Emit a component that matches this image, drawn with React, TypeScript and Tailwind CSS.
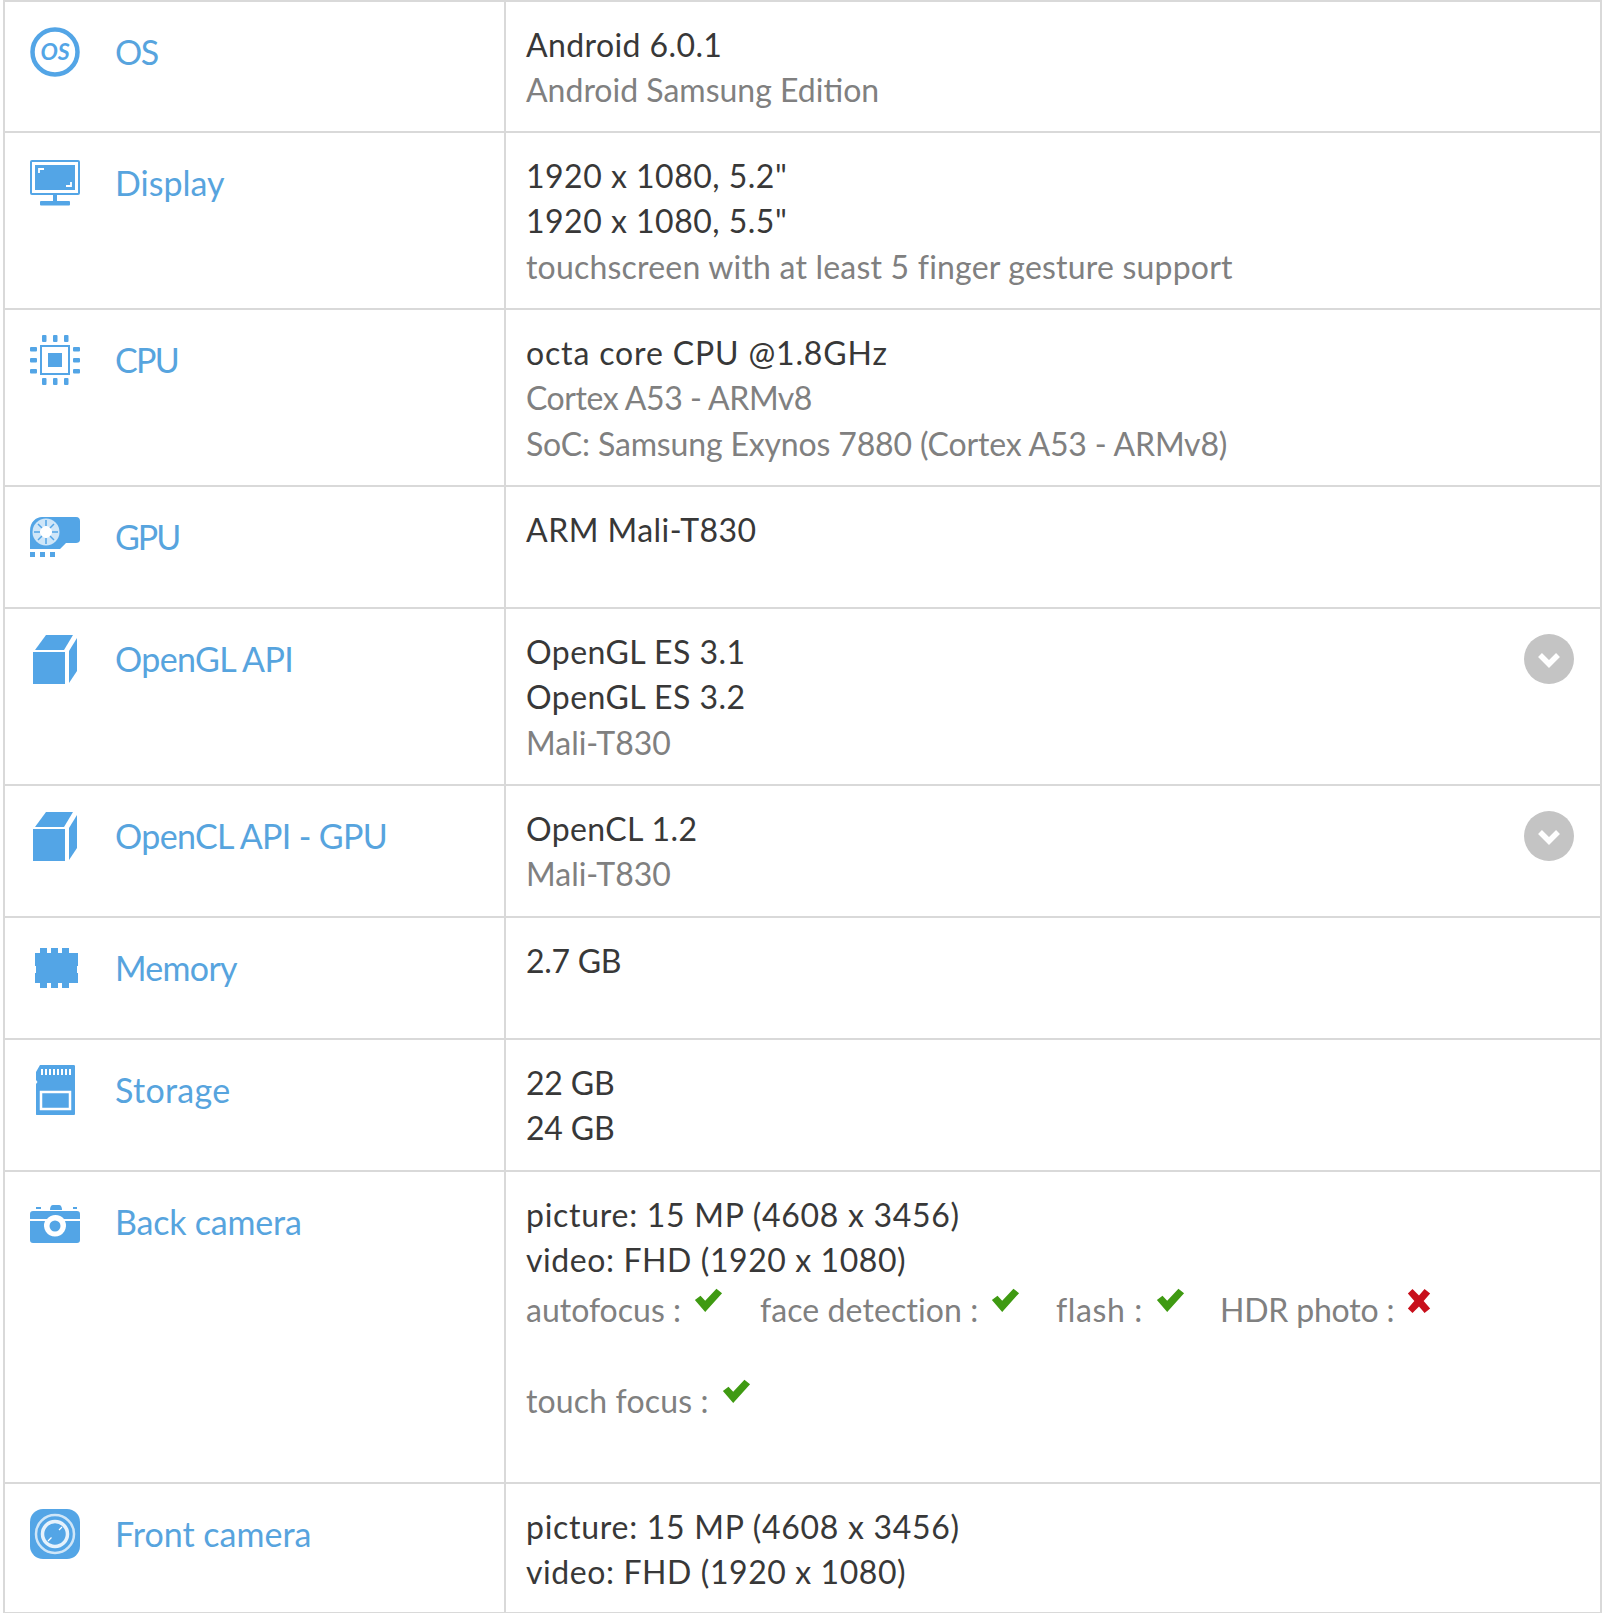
import React from "react";

const BLUE = "#53a5e6";

function Os() {
  return (
    <svg width="50" height="50" viewBox="0 0 50 50">
      <circle cx="25" cy="25" r="22.5" fill="none" stroke={BLUE} strokeWidth="4.5" />
      <text x="25" y="33" textAnchor="middle" fontFamily="Lato, sans-serif" fontStyle="italic" fontWeight="700" fontSize="23" fill={BLUE}>OS</text>
    </svg>
  );
}
function Display() {
  return (
    <svg width="50" height="50" viewBox="0 0 50 50">
      <rect x="1" y="3" width="48" height="33" rx="1" fill="none" stroke={BLUE} strokeWidth="2" />
      <rect x="5" y="7" width="40" height="25" fill={BLUE} />
      <path d="M9 15v-4h5M41 24v4h-5" fill="none" stroke="#fff" strokeWidth="1.8" />
      <rect x="23" y="37" width="4" height="7" fill={BLUE} />
      <rect x="10" y="43" width="30" height="4.5" rx="1" fill={BLUE} />
    </svg>
  );
}
function Cpu() {
  return (
    <svg width="50" height="50" viewBox="0 0 50 50">
      <rect x="11" y="11" width="28" height="28" fill="none" stroke={BLUE} strokeWidth="2" />
      <rect x="18" y="18" width="14" height="14" fill={BLUE} />
      {[12, 23, 34].map((p) => (
        <g key={p} fill={BLUE}>
          <rect x={p} y="0" width="4.5" height="7" rx="1" />
          <rect x={p} y="43" width="4.5" height="7" rx="1" />
          <rect x="0" y={p} width="7" height="4.5" rx="1" />
          <rect x="43" y={p} width="7" height="4.5" rx="1" />
        </g>
      ))}
    </svg>
  );
}
function Gpu() {
  return (
    <svg width="50" height="50" viewBox="0 0 50 50">
      <path d="M0 19C0 10 6 5 12 5h34c3 0 4 2 4 4v19c0 2-2 3-4 3H36l-6 6H0z" fill={BLUE} />
      <circle cx="16" cy="20" r="13.5" fill="#cfe6f8" />
      <circle cx="16" cy="20" r="6" fill="#fff" />
      <g stroke={BLUE} strokeWidth="1.5">
        <path d="M16 8v6M16 26v6M4 20h6M22 20h6M8 12l4 4M20 24l4 4M24 12l-4 4M12 24l-4 4" />
      </g>
      <rect x="0" y="40" width="5" height="5" fill={BLUE} />
      <rect x="10" y="40" width="5" height="5" fill={BLUE} />
      <rect x="20" y="40" width="5" height="5" fill={BLUE} />
    </svg>
  );
}
function Cube() {
  return (
    <svg width="50" height="50" viewBox="0 0 50 50">
      <rect x="3" y="18" width="32" height="32" fill={BLUE} />
      <path d="M5 16L16 1h27l-9 15z" fill={BLUE} />
      <path d="M39 17l8-13v33l-8 12z" fill={BLUE} />
    </svg>
  );
}
function Memory() {
  return (
    <svg width="50" height="50" viewBox="0 0 50 50">
      <path d="M10 5h7v5h4V5h7v5h4V5h7v5h9v13h-1v7h1v10h-9v5h-7v-5h-4v5h-7v-5h-4v5h-7v-5H5V30h1v-7H5V10h5z" fill={BLUE} />
    </svg>
  );
}
function Storage() {
  return (
    <svg width="50" height="50" viewBox="0 0 50 50">
      <path d="M10 0h34c1 0 1 1 1 2v47c0 .5-.5 1-1 1H7c-1 0-1-.5-1-1V19l1.500-2L6 15V7z" fill={BLUE} />
      <g fill="#fff">
        {[11, 15, 19, 23, 27, 31, 35, 39].map((x) => (
          <rect key={x} x={x} y="4" width="2" height="6" />
        ))}
      </g>
      <rect x="11" y="27" width="29" height="17" fill="none" stroke="#fff" strokeWidth="2.5" />
    </svg>
  );
}
function Camera() {
  return (
    <svg width="50" height="50" viewBox="0 0 50 50">
      <rect x="6" y="10" width="5" height="2" fill={BLUE} />
      <path d="M20 13c0-3 1-5 3-5h6c2 0 3 2 3 5z" fill={BLUE} />
      <rect x="43" y="10" width="4" height="2" fill={BLUE} />
      <path d="M0 17c0-2 1-3 3-3h44c2 0 3 1 3 3v5H34a11 11 0 0 0-17 0H0zM0 24h15a11 11 0 1 0 20 0h15v19c0 2-1 3-3 3H3c-2 0-3-1-3-3z" fill={BLUE} />
      <circle cx="25" cy="29" r="5.5" fill={BLUE} />
    </svg>
  );
}
function Front() {
  return (
    <svg width="50" height="50" viewBox="0 0 50 50">
      <rect x="0" y="0" width="50" height="50" rx="13" fill={BLUE} />
      <circle cx="25" cy="25" r="19" fill="none" stroke="#cfe6f8" strokeWidth="2.5" />
      <circle cx="25" cy="25" r="12.500" fill="none" stroke="#e6f2fc" strokeWidth="3.5" />
      <circle cx="25" cy="25" r="5" fill={BLUE} />
      <path d="M18 32l3.500-3.500M29 21l3-3" stroke="#fff" strokeWidth="1.2" />
    </svg>
  );
}
function Chevron() {
  return (
    <svg width="50" height="50" viewBox="0 0 50 50" className="shrink-0">
      <circle cx="25" cy="25" r="25" fill="#c4c4c4" />
      <path d="M16 21l9 9 9-9" fill="none" stroke="#fff" strokeWidth="5.5" />
    </svg>
  );
}
function Check() {
  return (
    <svg width="30" height="24" viewBox="0 0 32 28" preserveAspectRatio="none" className="block shrink-0">
      <path d="M2 14l6-5 5 6L25 1l6 5-18 22z" fill="#3f9a12" />
    </svg>
  );
}
function Cross() {
  return (
    <svg width="26" height="26" viewBox="0 0 28 28" className="block shrink-0">
      <path d="M2 6l5-5 7 7 6-7 6 5-7 8 7 8-6 5-6-7-7 7-5-5 7-8z" fill="#c8101c" />
    </svg>
  );
}

function Main({ children, t = "" }: { children: React.ReactNode; t?: string }) {
  return <div className={`text-[#383838] ${t}`}>{children}</div>;
}
function Sub({ children, t = "" }: { children: React.ReactNode; t?: string }) {
  return <div className={`text-[#808080] ${t}`}>{children}</div>;
}

function Row({
  icon,
  label,
  h,
  labelT = "",
  chevron,
  children,
}: {
  icon: React.ReactNode;
  label: string;
  h: string;
  labelT?: string;
  chevron?: boolean;
  children: React.ReactNode;
}) {
  return (
    <div className={`flex border-b-2 border-[#d9d9d9] ${h}`}>
      <div className="flex w-[501px] shrink-0 items-start border-r-2 border-[#d9d9d9] pt-[25px] pl-[25px]">
        <div className="h-[50px] w-[50px] shrink-0">{icon}</div>
        <div className={`ml-[35px] text-[34px] leading-[50px] text-[#57a4de] ${labelT}`}>{label}</div>
      </div>
      <div className="flex flex-1 items-start justify-between pt-[20px] pr-[26px] pl-[20px] text-[32px] leading-[45.3px]">
        <div>{children}</div>
        {chevron && (
          <div className="pt-[5px]">
            <Chevron />
          </div>
        )}
      </div>
    </div>
  );
}

function Feature({ label, ok, cls, t = "" }: { label: string; ok: boolean; cls: string; t?: string }) {
  return (
    <span className={`flex items-start ${cls}`}>
      <span className={`pt-[4px] ${t}`}>{label}</span>
      <span className="mt-[5px] ml-[12px]">{ok ? <Check /> : <Cross />}</span>
    </span>
  );
}

export default function App() {
  return (
    <div
      className="h-[1613px] w-[1603px] overflow-hidden bg-white pr-px pl-[3px]"
      style={{ fontFamily: "Lato, 'Noto Sans', sans-serif" }}
    >
      <div className="border-t-2 border-r-2 border-l-2 border-[#d9d9d9]">
        <Row icon={<Os />} label="OS" labelT="tracking-[-1.5px]" h="h-[131px]">
          <Main t="tracking-[0.4px]">Android 6.0.1</Main>
          <Sub>Android Samsung Edition</Sub>
        </Row>
        <Row icon={<Display />} label="Display" h="h-[177px]">
          <Main t="tracking-[0.5px]">1920 x 1080, 5.2"</Main>
          <Main t="tracking-[0.5px]">1920 x 1080, 5.5"</Main>
          <Sub t="tracking-[0.2px]">touchscreen with at least 5 finger gesture support</Sub>
        </Row>
        <Row icon={<Cpu />} label="CPU" labelT="tracking-[-1.7px]" h="h-[177px]">
          <Main t="tracking-[0.85px]">octa core CPU @1.8GHz</Main>
          <Sub t="tracking-[-0.45px]">Cortex A53 - ARMv8</Sub>
          <Sub t="tracking-[-0.16px]">SoC: Samsung Exynos 7880 (Cortex A53 - ARMv8)</Sub>
        </Row>
        <Row icon={<Gpu />} label="GPU" labelT="tracking-[-2px]" h="h-[122px]">
          <Main t="tracking-[0.47px]">ARM Mali-T830</Main>
        </Row>
        <Row icon={<Cube />} label="OpenGL API" labelT="tracking-[-0.6px]" h="h-[177px]" chevron>
          <Main t="tracking-[0.47px]">OpenGL ES 3.1</Main>
          <Main t="tracking-[0.47px]">OpenGL ES 3.2</Main>
          <Sub>Mali-T830</Sub>
        </Row>
        <Row icon={<Cube />} label="OpenCL API - GPU" labelT="tracking-[-0.65px]" h="h-[132px]" chevron>
          <Main t="tracking-[0.4px]">OpenCL 1.2</Main>
          <Sub>Mali-T830</Sub>
        </Row>
        <Row icon={<Memory />} label="Memory" labelT="tracking-[-0.7px]" h="h-[122px]">
          <Main t="tracking-[-0.3px]">2.7 GB</Main>
        </Row>
        <Row icon={<Storage />} label="Storage" labelT="tracking-[0.3px]" h="h-[132px]">
          <Main t="tracking-[-0.2px]">22 GB</Main>
          <Main t="tracking-[-0.2px]">24 GB</Main>
        </Row>
        <Row icon={<Camera />} label="Back camera" labelT="tracking-[-0.2px]" h="h-[312px]">
          <Main t="tracking-[0.72px]">picture: 15 MP (4608 x 3456)</Main>
          <Main t="tracking-[0.58px]">video: FHD (1920 x 1080)</Main>
          <div className="text-[#808080]">
            <div className="flex">
              <Feature label="autofocus :" ok cls="w-[234px]" />
              <Feature label="face detection :" ok cls="w-[296px]" t="tracking-[0.1px]" />
              <Feature label="flash :" ok cls="w-[164px]" t="tracking-[0.6px]" />
              <Feature label="HDR photo :" ok={false} cls="" t="tracking-[-0.2px]" />
            </div>
            <div className="mt-[42px] flex">
              <Feature label="touch focus :" ok cls="" t="tracking-[0.15px]" />
            </div>
          </div>
        </Row>
        <Row icon={<Front />} label="Front camera" h="h-[130px]">
          <Main t="tracking-[0.72px]">picture: 15 MP (4608 x 3456)</Main>
          <Main t="tracking-[0.58px]">video: FHD (1920 x 1080)</Main>
        </Row>
      </div>
    </div>
  );
}
